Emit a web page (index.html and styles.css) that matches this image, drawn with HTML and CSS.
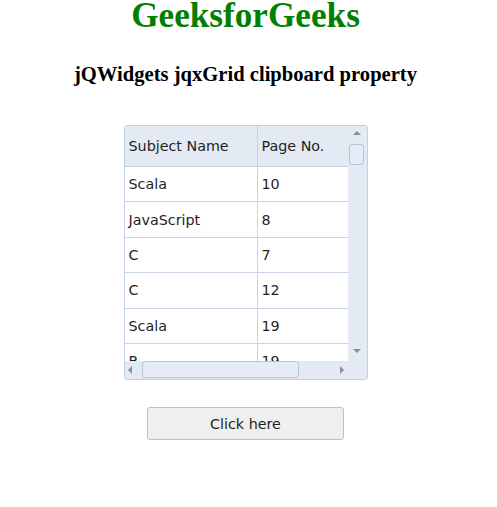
FILE: index.html
```html
<!DOCTYPE html>
<html>
<head>
<meta charset="utf-8">
<link rel="stylesheet" href="styles.css">
</head>
<body>
<div class="page">
  <h1 class="title">GeeksforGeeks</h1>
  <h3 class="subtitle">jQWidgets jqxGrid clipboard property</h3>
  <div class="grid">
    <div class="viewport">
      <div class="row head">
        <div class="cell c1">Subject Name</div>
        <div class="cell c2">Page No.</div>
      </div>
      <div class="row"><div class="cell c1">Scala</div><div class="cell c2">10</div></div>
      <div class="row"><div class="cell c1">JavaScript</div><div class="cell c2">8</div></div>
      <div class="row"><div class="cell c1">C</div><div class="cell c2">7</div></div>
      <div class="row"><div class="cell c1">C</div><div class="cell c2">12</div></div>
      <div class="row"><div class="cell c1">Scala</div><div class="cell c2">19</div></div>
      <div class="row"><div class="cell c1">R</div><div class="cell c2">19</div></div>
    </div>
    <div class="vscroll">
      <span class="arrow up"></span>
      <div class="vthumb"></div>
      <span class="arrow down"></span>
    </div>
    <div class="hscroll">
      <span class="arrow left"></span>
      <div class="hthumb"></div>
      <span class="arrow right"></span>
    </div>
    <div class="corner"></div>
  </div>
  <button class="btn">Click here</button>
</div>
</body>
</html>
```

FILE: styles.css
```css
html, body {
  margin: 0;
  padding: 0;
  background: #ffffff;
}

.page {
  width: 491px;
  display: flex;
  flex-direction: column;
  align-items: center;
}

.title {
  margin: 0;
  font-family: "Liberation Serif", "Times New Roman", serif;
  font-weight: 700;
  font-size: 35.2px;
  line-height: 32px;
  color: #008000;
}

.subtitle {
  margin: 30px 0 0;
  font-family: "Liberation Serif", "Times New Roman", serif;
  font-weight: 700;
  font-size: 20.6px;
  line-height: 24px;
  color: #000;
}

.grid {
  margin-top: 39px;
  width: 244px;
  height: 255px;
  box-sizing: border-box;
  border: 1px solid #c3d0e2;
  border-radius: 3px;
  display: grid;
  grid-template-columns: 223px 19px;
  grid-template-rows: 235px 18px;
  overflow: hidden;
  font-family: "DejaVu Sans", Verdana, sans-serif;
  font-size: 14.3px;
  color: #1f1f1f;
  background: #e3eaf4;
}

.viewport {
  background: #fff;
  overflow: hidden;
}

.row {
  display: grid;
  grid-template-columns: 133px 90px;
  height: 35.4px;
  box-sizing: border-box;
  border-bottom: 1px solid #c9d5e6;
}

.row.head {
  height: 41px;
  background: #e3eaf4;
  border-bottom-color: #c5d2e3;
}

.cell {
  display: flex;
  align-items: center;
  padding-left: 4px;
  box-sizing: border-box;
  white-space: nowrap;
}

.c1 {
  border-right: 1px solid #c9d5e6;
}

.row.head .c1 {
  border-right-color: #c5d2e3;
}

.vscroll {
  position: relative;
  background: #e3eaf4;
}

.vthumb {
  position: absolute;
  left: 1px;
  top: 18px;
  width: 15px;
  height: 21px;
  border: 1px solid #b5c4d8;
  border-radius: 3px;
  background: #e6ecf5;
  box-sizing: border-box;
}

.hscroll {
  position: relative;
  background: #e3eaf4;
}

.hthumb {
  position: absolute;
  left: 17px;
  top: 0;
  width: 157px;
  height: 17px;
  border: 1px solid #b5c4d8;
  border-radius: 3px;
  background: #e6ecf5;
  box-sizing: border-box;
}

.corner {
  background: #e3eaf4;
}

.arrow {
  position: absolute;
  width: 0;
  height: 0;
}

.arrow.up {
  left: 5px;
  top: 5px;
  border-left: 4px solid transparent;
  border-right: 4px solid transparent;
  border-bottom: 4px solid #8a8f96;
}

.arrow.down {
  left: 5px;
  bottom: 8px;
  border-left: 4px solid transparent;
  border-right: 4px solid transparent;
  border-top: 4px solid #8a8f96;
}

.arrow.left {
  left: 3px;
  top: 5px;
  border-top: 4px solid transparent;
  border-bottom: 4px solid transparent;
  border-right: 4px solid #8a8f96;
}

.arrow.right {
  left: 215px;
  top: 5px;
  border-top: 4px solid transparent;
  border-bottom: 4px solid transparent;
  border-left: 4px solid #8a8f96;
}

.btn {
  margin-top: 27px;
  width: 197px;
  height: 33px;
  border: 1px solid #c0c0c0;
  border-radius: 3px;
  background: #efefef;
  font-family: "DejaVu Sans", Verdana, sans-serif;
  font-size: 14.3px;
  color: #1f1f1f;
  padding: 0;
}
```
